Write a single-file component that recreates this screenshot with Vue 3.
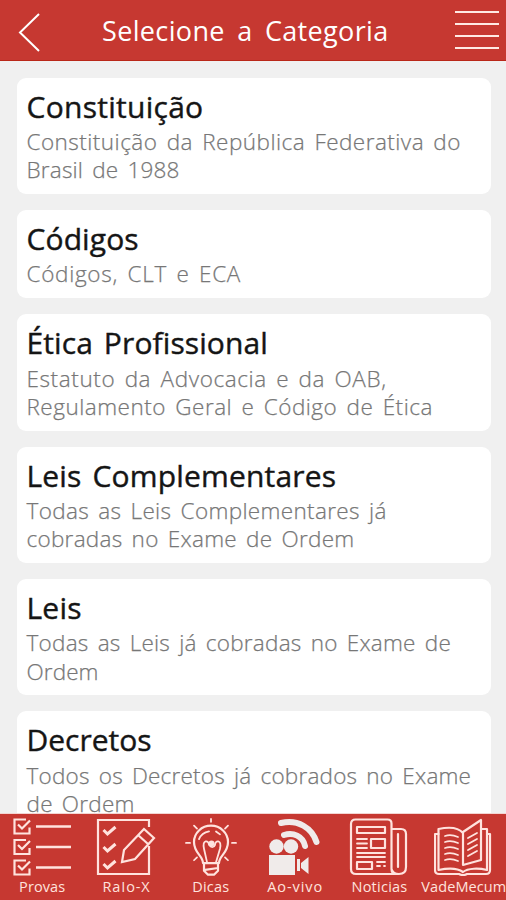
<template>
	<div class = "app">
		<header class = "header">
			<button class = "back" type = "button" aria-label = "Voltar">
				<svg width = "24" height = "42" viewBox = "0 0 24 42"><path d = "M22 2 L3 20.5 L22 39" /></svg>
			</button>
			<h1 class = "heading">Selecione a Categoria</h1>
			<button class = "menu" type = "button" aria-label = "Menu">
				<span v-for = "n in 4" :key = "n" class = "bar"></span>
			</button>
		</header>

		<main class = "list">
			<article v-for = "item in categories" :key = "item.title" class = "card">
				<h2 class = "title" :style = "{letterSpacing: item.spacing + 'px'}">{{ item.title }}</h2>
				<p class = "text">
					<span
						v-for = "line in item.lines"
						:key = "line.text"
						class = "line"
						:style = "{letterSpacing: line.spacing + 'px'}"
					>{{ line.text }}</span>
				</p>
			</article>
		</main>

		<nav class = "tabs">
			<a v-for = "tab in tabs" :key = "tab.name" class = "tab">
				<svg class = "icon" width = "60" height = "62" viewBox = "0 0 60 62">
					<g v-if = "tab.icon === 'checklist'">
						<g v-for = "y in [4.5, 25, 45.5]" :key = "y" :transform = "`translate(0 ${y})`">
							<path d = "M14 1H2.5v14h15V9" />
							<path d = "M6 6l4 4 8-8" />
							<path class = "line-item" d = "M24 8h35" />
						</g>
					</g>
					<g v-else-if = "tab.icon === 'exam'">
						<path d = "M53 13V6H2v54h51V32" />
						<path class = "mark" d = "M7.5 16l4 4 8-7M7.5 33l4 4 8-7M7.5 50l4 4 8-7" />
						<path d = "M26 48l2-12 20-21 10 9-19 21zM42 21l10 9" />
					</g>
					<g v-else-if = "tab.icon === 'bulb'" class = "round" transform = "translate(0 4) scale(1 .96)">
						<path d = "M22 47c0-8-9-10-9-22a17 17 0 0 1 34 0c0 12-9 14-9 22z" />
						<path d = "M23 47v8l4 4h6l4-4v-8M24 54l13-2" />
						<path class = "thin" d = "M26 46l-3-14c-2-10 5-9 5-4 2 3 5 3 6 0 0-5 7-6 5 4l-4 14M18 22c2-5 5-7 10-8M35 14l4 3" />
						<path class = "thin" d = "M30 1v3M13 8l3 3M47 8l-3 3M5 26h4M51 26h4M13 44l3-3M47 44l-3-3" />
						<circle class = "solid" cx = "30.5" cy = "26.5" r = "3" />
					</g>
					<g v-else-if = "tab.icon === 'camera'" class = "camera">
						<circle class = "solid" cx = "11.5" cy = "32.5" r = "7.2" />
						<circle class = "solid" cx = "26" cy = "32.5" r = "7.2" />
						<path class = "solid" d = "M4 41h26v20H4zM32 45h3v12h-3zM36 49l7.5-6v17L36 54z" />
						<path class = "wave" d = "M19 21c9-3 19 1 21 11M16 9c17-4 31 5 35.500 19" />
					</g>
					<g v-else-if = "tab.icon === 'news'" class = "round">
						<path d = "M2 10q0-4.500 4.500-4.500h32q4 0 4 4V55q0 5 5 5H7q-5 0-5-5zM42.500 15H52q5 0 5 5v33q0 7-7 7-6 0-7.500-5M49 20v33" />
						<path d = "M8 13h28v6H8zM22 25h14v9H22zM8 48h15v7H8z" />
						<path class = "thin" d = "M8 25h10M8 29.500h10M8 34h10M8 39h28M8 43h28M28 48h8M28 52h3M35 52h1" />
					</g>
					<g v-else class = "round">
						<path d = "M29 19C24 13 14 13 4.500 15v41c9-2 19-2 24.500 2 5-4 16-4 24-2V15h-6M29 51V18l18-12v40z" />
						<path d = "M4.500 20H1v36q0 4 4 4h20q4 2 8 0h19q4 0 4-4V20h-3" />
						<path class = "thin" d = "M11 22q6-2 13 1M11 28q6-2 13 1M11 34q6-2 13 1M11 40q6-2 13 1M11 46q6-2 13 1M34 24l9-5M34 30l9-5M34 36l9-5M34 42l9-5" />
					</g>
				</svg>
				<span class = "name" :style = "{letterSpacing: tab.spacing + 'px'}">{{ tab.name }}</span>
			</a>
		</nav>
	</div>
</template>

<script setup>
// spacing is the tracking of each line, in px
const categories = [
	{title: "Constituição", spacing: 0.27, lines: [
		{text: "Constituição da República Federativa do", spacing: 0.47},
		{text: "Brasil de 1988", spacing: 0.2}
	]},
	{title: "Códigos", spacing: 0.1, lines: [
		{text: "Códigos, CLT e ECA", spacing: 0.7}
	]},
	{title: "Ética Profissional", spacing: 0.1, lines: [
		{text: "Estatuto da Advocacia e da OAB,", spacing: 0.6},
		{text: "Regulamento Geral e Código de Ética", spacing: 0.5}
	]},
	{title: "Leis Complementares", spacing: 0.17, lines: [
		{text: "Todas as Leis Complementares já", spacing: 0.35},
		{text: "cobradas no Exame de Ordem", spacing: 0.28}
	]},
	{title: "Leis", spacing: 0.2, lines: [
		{text: "Todas as Leis já cobradas no Exame de", spacing: 0.25},
		{text: "Ordem", spacing: 0.1}
	]},
	{title: "Decretos", spacing: 0, lines: [
		{text: "Todos os Decretos já cobrados no Exame", spacing: 0.22},
		{text: "de Ordem", spacing: 0.25}
	]}
]

const tabs = [
	{name: "Provas", icon: "checklist", spacing: 0.1},
	{name: "RaIo-X", icon: "exam", spacing: 0.9},
	{name: "Dicas", icon: "bulb", spacing: 0.2},
	{name: "Ao-vivo", icon: "camera", spacing: 0.9},
	{name: "Noticias", icon: "news", spacing: 0.25},
	{name: "VadeMecum", icon: "book", spacing: 0.1}
]
</script>

<style>
body {
	margin: 0;
	overflow: hidden;
}
</style>

<style scoped>
.app {
	display: flex;
	flex-direction: column;
	height: 100vh;
	overflow: hidden;
	background: #f0f0f0;
	font-family: "Open Sans", "Noto Sans", sans-serif;
}

.header {
	display: flex;
	flex: none;
	align-items: center;
	box-sizing: border-box;
	height: 61px;
	padding: 0 7px 0 17px;
	background: #c63831;
	border-bottom: 1px solid #b92719;
}

.back, .menu {
	padding: 0;
	border: 0;
	background: none;
}

.back {
	display: flex;
	width: 44px;
	padding-top: 5px;
}

.back path {
	fill: none;
	stroke: white;
	stroke-width: 2;
}

.heading {
	margin: 0 auto 0 41px;
	padding-top: 2px;
	color: white;
	font-size: 27px;
	font-weight: 400;
	line-height: 58px;
	letter-spacing: 0.35px;
	word-spacing: 5px;
	white-space: nowrap;
}

.menu {
	display: grid;
	gap: 10px;
	width: 44px;
}

.bar {
	height: 2px;
	background: #ffe9e4;
}

.list {
	display: flex;
	flex: 1;
	flex-direction: column;
	gap: 16px;
	min-height: 0;
	overflow: hidden;
	padding: 16.5px 15.5px 0 16.5px;
}

.card {
	flex: none;
	padding: 9px 10px 9.5px;
	border-radius: 9px;
	background: white;
}

.title {
	margin: 0 0 1.5px;
	color: #151515;
	font-size: 30px;
	font-weight: 400;
	line-height: 40px;
	word-spacing: 3px;
	white-space: nowrap;
	-webkit-text-stroke: 0.4px #151515;
}

.text {
	margin: 0;
	color: #777;
	font-size: 22.5px;
	font-weight: 300;
	line-height: 28.2px;
	word-spacing: 3px;
	-webkit-text-stroke: 0.25px #777;
}

.line {
	display: block;
	white-space: nowrap;
}

.tabs {
	display: grid;
	flex: none;
	grid-template-columns: repeat(6, 1fr);
	box-sizing: border-box;
	height: 87px;
	background: #c63831;
	border-top: 1px solid #f3d5d2;
}

.tab {
	display: flex;
	flex-direction: column;
	align-items: center;
	min-width: 0;
	color: #ffe3de;
}

.icon {
	flex: none;
	fill: none;
	stroke: currentColor;
	stroke-width: 2.2;
}

.thin {stroke-width: 1.8}

.line-item {stroke-width: 2.4}

.mark {stroke-width: 3}

.camera {color: #f0ebea}

.wave {
	stroke: currentColor;
	stroke-width: 6;
	stroke-linecap: round;
}

.solid {
	fill: currentColor;
	stroke: none;
}

.round {
	stroke-linecap: round;
	stroke-linejoin: round;
}

.name {
	font-size: 14.5px;
	line-height: 21px;
	white-space: nowrap;
}
</style>
